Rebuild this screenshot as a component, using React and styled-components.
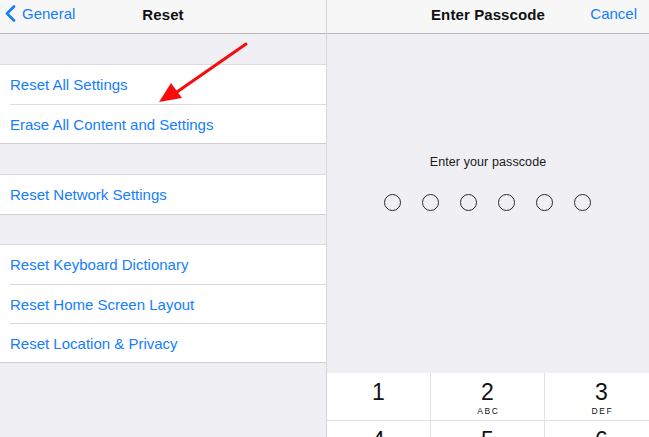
import React from "react";
import styled, { createGlobalStyle } from "styled-components";

const GlobalStyle = createGlobalStyle`
  html, body {
    margin: 0;
    padding: 0;
    background: #efeff4;
  }
  * {
    box-sizing: border-box;
  }
`;

const BLUE = "#157efb";

const groups = [
  ["Reset All Settings", "Erase All Content and Settings"],
  ["Reset Network Settings"],
  ["Reset Keyboard Dictionary", "Reset Home Screen Layout", "Reset Location & Privacy"],
];

const gaps = [30, 30, 29];

const keys = [
  { digit: "1", letters: "" },
  { digit: "2", letters: "ABC" },
  { digit: "3", letters: "DEF" },
  { digit: "4", letters: "GHI" },
  { digit: "5", letters: "JKL" },
  { digit: "6", letters: "MNO" },
];

const App = () => {
  return (
    <>
      <GlobalStyle />
      <Screen>
        <SettingsPanel>
          <NavBar>
            <BackButton>
              <svg width="11" height="17" viewBox="0 0 11 17">
                <path
                  d="M9 1.5 L2 8.5 L9 15.5"
                  fill="none"
                  stroke={BLUE}
                  strokeWidth="2.6"
                  strokeLinecap="round"
                  strokeLinejoin="round"
                />
              </svg>
              <span>General</span>
            </BackButton>
            <NavTitle>Reset</NavTitle>
          </NavBar>
          {groups.map((rows, i) => (
            <React.Fragment key={i}>
              <GroupGap $height={gaps[i]} />
              <Group>
                {rows.map((label) => (
                  <Row key={label}>
                    <RowLabel>{label}</RowLabel>
                  </Row>
                ))}
              </Group>
            </React.Fragment>
          ))}
          <Arrow width="110" height="70" viewBox="0 0 110 70">
            <line x1="96" y1="4" x2="24" y2="54" stroke="#f80b0b" strokeWidth="3" strokeLinecap="round" />
            <polygon points="9,62 21,43 32,58" fill="#f80b0b" />
          </Arrow>
        </SettingsPanel>

        <PasscodePanel>
          <NavBar>
            <NavTitle>Enter Passcode</NavTitle>
            <CancelButton>Cancel</CancelButton>
          </NavBar>
          <PromptArea>
            <Prompt>Enter your passcode</Prompt>
            <Dots>
              {Array.from({ length: 6 }).map((_, i) => (
                <Dot key={i} />
              ))}
            </Dots>
          </PromptArea>
          <Keypad>
            {keys.map((k) => (
              <Key key={k.digit}>
                <Digit>{k.digit}</Digit>
                {k.letters && <Letters>{k.letters}</Letters>}
              </Key>
            ))}
          </Keypad>
        </PasscodePanel>
      </Screen>
    </>
  );
};

const Screen = styled.div`
  display: flex;
  width: 649px;
  height: 437px;
  overflow: hidden;
  background: #efeff4;
  font-family: "Liberation Sans", Arial, sans-serif;
  -webkit-font-smoothing: antialiased;
`;

const SettingsPanel = styled.section`
  position: relative;
  width: 327px;
  flex-shrink: 0;
  border-right: 1px solid #d6d6da;
  background: #efeff4;
`;

const NavBar = styled.header`
  position: relative;
  flex-shrink: 0;
  display: flex;
  align-items: center;
  justify-content: center;
  height: 34px;
  padding-bottom: 5px;
  background: #f7f7f8;
  border-bottom: 1px solid #b5b5b8;
`;

const BackButton = styled.div`
  position: absolute;
  left: 5px;
  top: 0;
  bottom: 6px;
  display: flex;
  align-items: center;
  gap: 6px;
  color: ${BLUE};
  font-size: 15px;
`;

const NavTitle = styled.h1`
  margin: 0;
  font-size: 15px;
  font-weight: 700;
  color: #111;
  letter-spacing: 0.1px;
`;

const CancelButton = styled.div`
  position: absolute;
  right: 12px;
  top: 0;
  bottom: 6px;
  display: flex;
  align-items: center;
  color: ${BLUE};
  font-size: 15px;
`;

const GroupGap = styled.div`
  height: ${(p) => p.$height}px;
`;

const Group = styled.div`
  background: #fff;
  border-top: 1px solid #dcdce0;
  border-bottom: 1px solid #d0d0d4;
`;

const Row = styled.div`
  height: 39px;
  margin-left: 10px;
  display: flex;
  align-items: center;
  & + & {
    border-top: 1px solid #dcdce0;
  }
`;

const RowLabel = styled.span`
  color: ${BLUE};
  font-size: 15px;
`;

const Arrow = styled.svg`
  position: absolute;
  left: 150px;
  top: 40px;
`;

const PasscodePanel = styled.section`
  flex: 1;
  display: flex;
  flex-direction: column;
  min-width: 0;
`;

const PromptArea = styled.div`
  flex-shrink: 0;
  height: 339px;
  display: flex;
  flex-direction: column;
  align-items: center;
  padding-top: 121px;
`;

const Prompt = styled.p`
  margin: 0;
  font-size: 12.5px;
  color: #1a1a1a;
  letter-spacing: 0.1px;
`;

const Dots = styled.div`
  display: flex;
  gap: 21px;
  margin-top: 25px;
  margin-left: -2px;
`;

const Dot = styled.span`
  width: 17px;
  height: 17px;
  border-radius: 50%;
  border: 1.2px solid #2a2a2a;
`;

const Keypad = styled.div`
  flex-shrink: 0;
  display: grid;
  grid-template-columns: 103px 114px 114px;
  grid-auto-rows: 48px;
  background: #fff;
`;

const Key = styled.div`
  display: flex;
  flex-direction: column;
  align-items: center;
  padding-top: 6px;
  border-bottom: 1px solid #e2e2e4;
  & + & {
    border-left: 1px solid #e2e2e4;
  }
  &:nth-child(3n + 1) {
    border-left: none;
  }
`;

const Digit = styled.span`
  font-size: 23px;
  line-height: 26px;
  color: #111;
  font-weight: 400;
`;

const Letters = styled.span`
  font-size: 8.5px;
  font-weight: 400;
  letter-spacing: 1.6px;
  margin-left: 1.6px;
  color: #111;
  line-height: 10px;
  margin-top: 1px;
`;

export default App;
